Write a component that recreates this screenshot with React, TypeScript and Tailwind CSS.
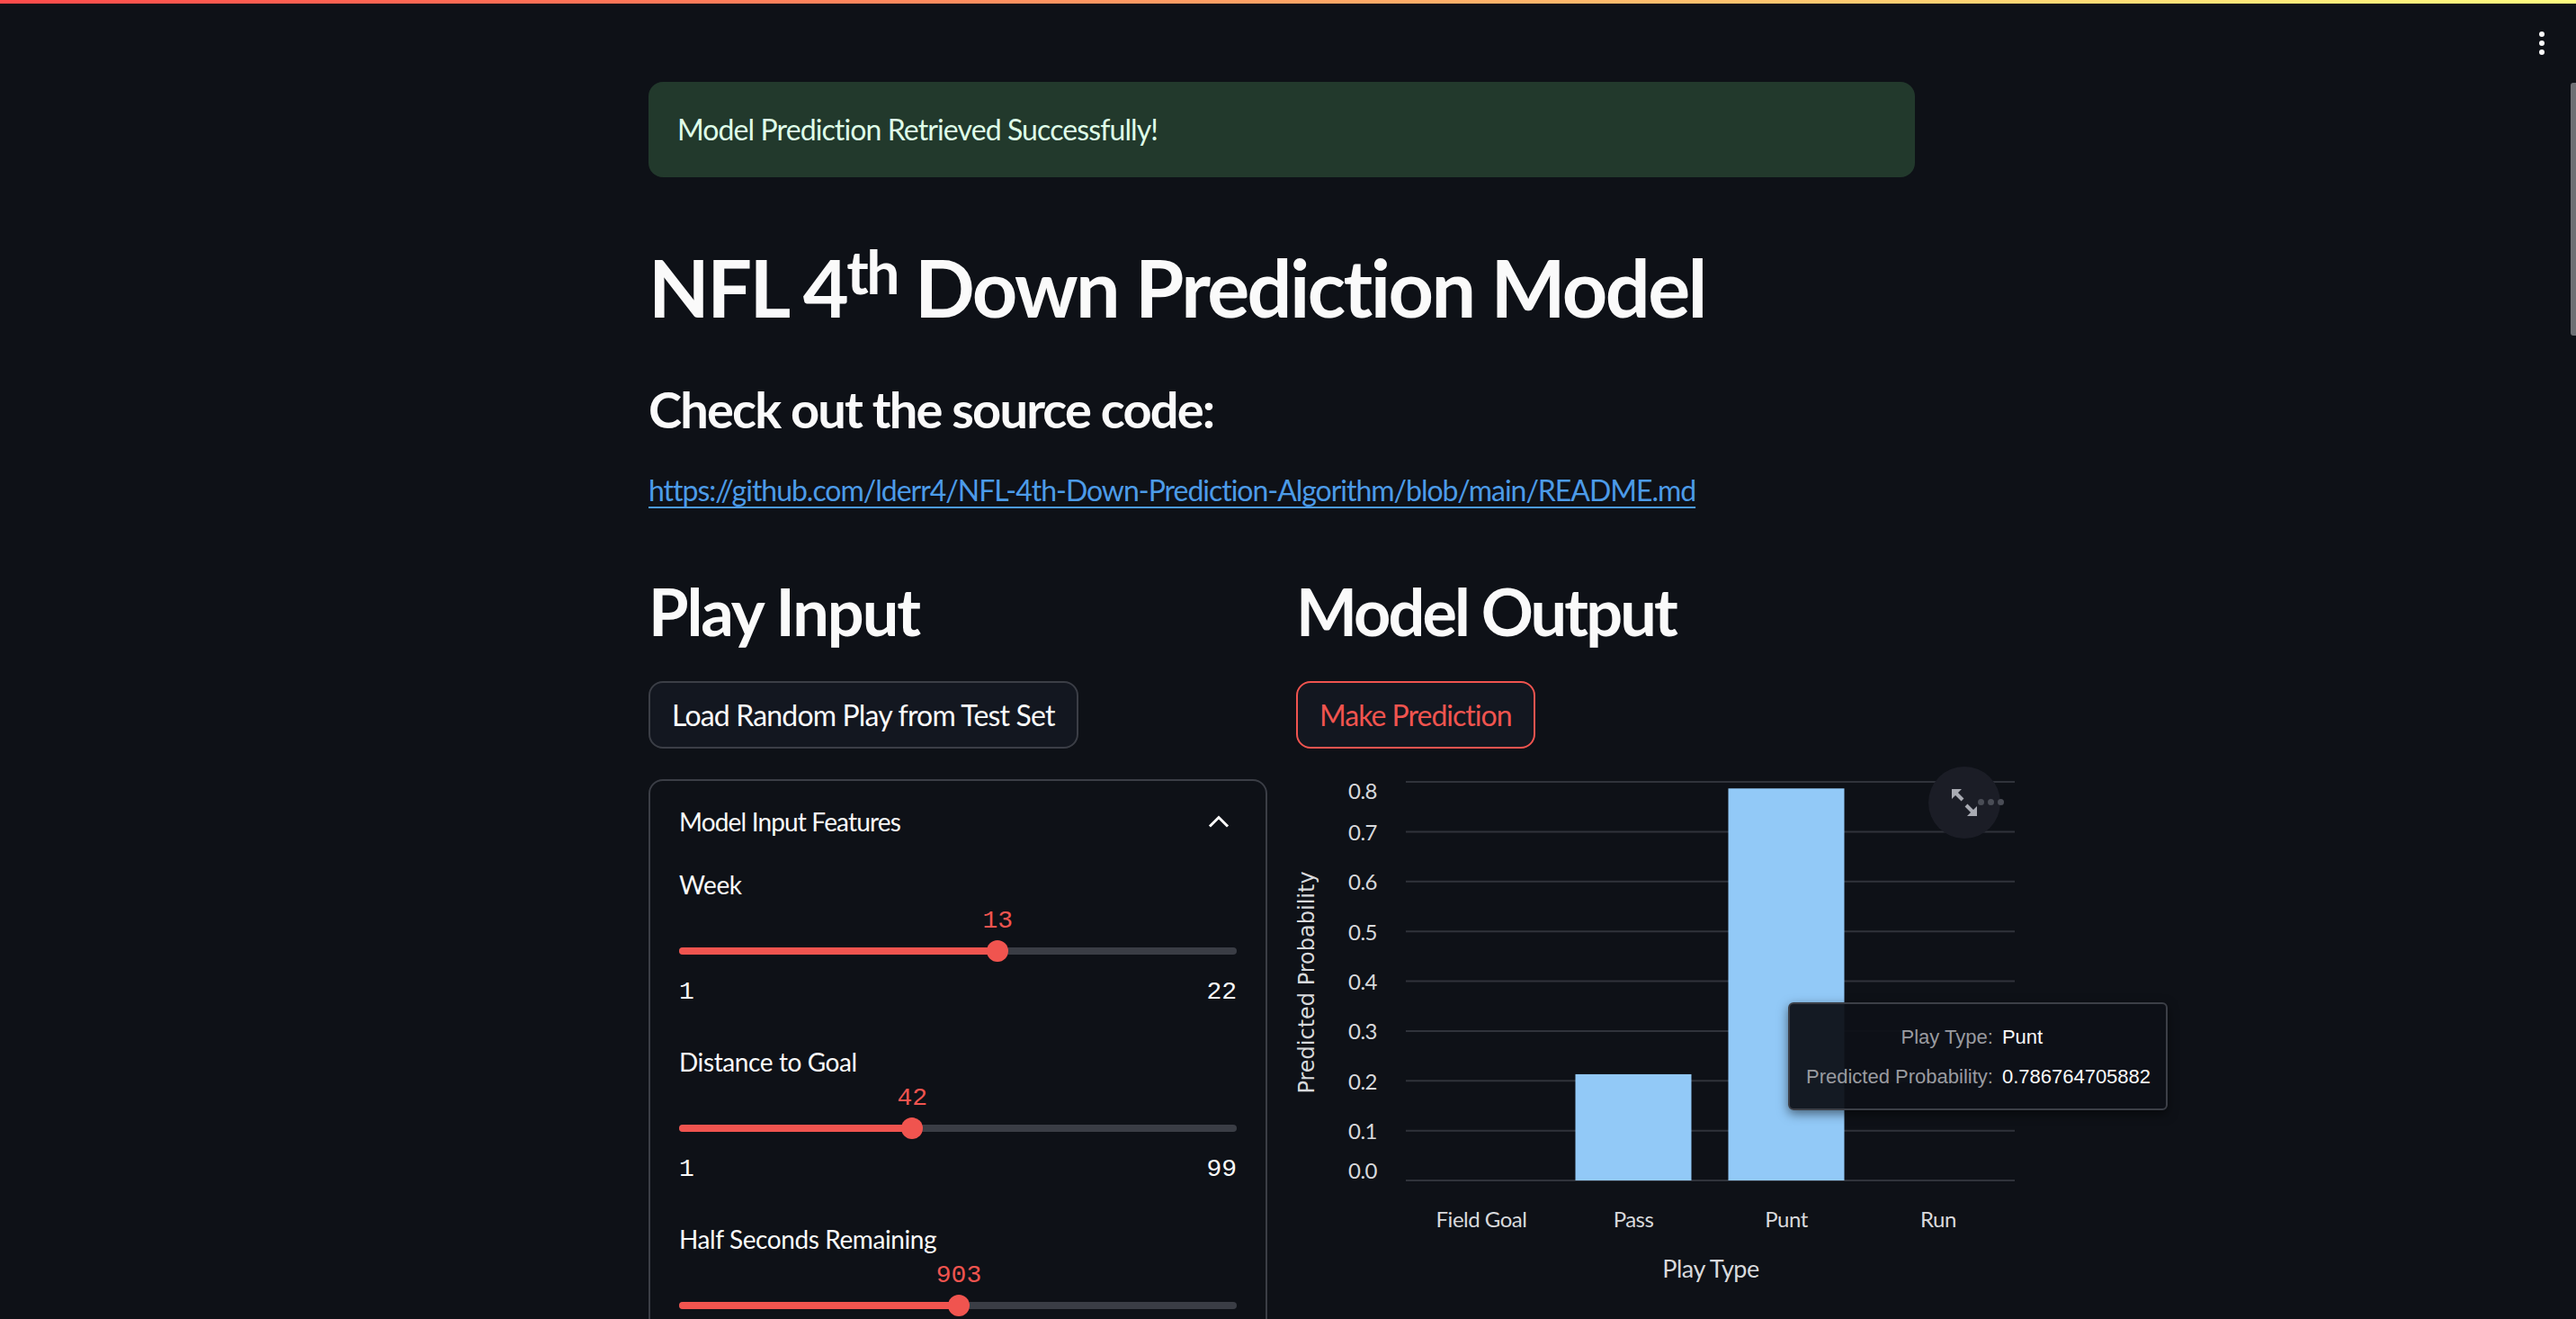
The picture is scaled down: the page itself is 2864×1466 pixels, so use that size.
import React from "react"

function Slider({
  label,
  value,
  min,
  max,
  showTicks = true,
}: {
  label: string
  value: number
  min: number
  max: number
  showTicks?: boolean
}) {
  const pct = ((value - min) / (max - min)) * 100
  return (
    <div className="mb-[35px]">
      <div className="h-[40px] flex items-center text-[28px] text-[#fafafa]">{label}</div>
      <div className="relative h-[42px]">
        <span
          className="absolute top-1/2 -translate-x-1/2 -translate-y-1/2 font-['Liberation_Mono',monospace] text-[28px] leading-none tracking-normal text-[#f0544f]"
          style={{ left: `${pct}%` }}
        >
          {value}
        </span>
      </div>
      <div className="relative h-[24px] flex items-center">
        <div className="relative h-[8px] w-full rounded-full bg-[#3a3d45]">
          <div className="absolute inset-y-0 left-0 rounded-full bg-[#f0544f]" style={{ width: `${pct}%` }} />
        </div>
        <div
          className="absolute top-0 h-[24px] w-[24px] -translate-x-1/2 rounded-full bg-[#f0544f]"
          style={{ left: `${pct}%` }}
        />
      </div>
      {showTicks && (
        <div className="mt-[12px] h-[44px] flex items-center justify-between font-['Liberation_Mono',monospace] text-[28px] tracking-normal text-[#fafafa]">
          <span>{min}</span>
          <span>{max}</span>
        </div>
      )}
    </div>
  )
}

function Chart() {
  const y = (v: number) => 452 - v * 553.75
  const ticks = [0, 0.1, 0.2, 0.3, 0.4, 0.5, 0.6, 0.7, 0.8]
  const labelY = (v: number) => (v === 0.8 ? 18 : v === 0 ? 440 : y(v))
  const cats = [
    { name: "Field Goal", x: 206, v: 0 },
    { name: "Pass", x: 375, v: 0.2132 },
    { name: "Punt", x: 545, v: 0.7868 },
    { name: "Run", x: 714, v: 0 },
  ]
  return (
    <div className="relative mt-[28px] h-[600px] tracking-normal">
      <svg width="1000" height="600" className="absolute left-0 top-0 overflow-visible">
        {ticks.map((t) => (
          <line key={t} x1={122} x2={799} y1={y(t)} y2={y(t)} stroke="#30333b" strokeWidth={2} />
        ))}
        {cats.map((c) =>
          c.v > 0 ? (
            <rect key={c.name} x={c.x - 64.5} y={y(c.v)} width={129} height={452 - y(c.v)} fill="#92c9f7" />
          ) : null
        )}
        {ticks.map((t) => (
          <text
            key={t}
            x={90}
            y={labelY(t)}
            textAnchor="end"
            dominantBaseline="central"
            fontFamily="Lato, sans-serif"
            fontSize={24}
            letterSpacing={-0.5}
            fill="#d8d9dc"
          >
            {t.toFixed(1)}
          </text>
        ))}
        {cats.map((c) => (
          <text
            key={c.name}
            x={c.x}
            y={494}
            textAnchor="middle"
            dominantBaseline="central"
            fontFamily="Lato, sans-serif"
            fontSize={24}
            letterSpacing={-0.5}
            fill="#d8d9dc"
          >
            {c.name}
          </text>
        ))}
        <text
          x={461}
          y={549}
          textAnchor="middle"
          dominantBaseline="central"
          fontFamily="Lato, sans-serif"
          fontSize={27}
          letterSpacing={-0.5}
          fill="#d8d9dc"
        >
          Play Type
        </text>
        <text
          x={12}
          y={232}
          textAnchor="middle"
          dominantBaseline="central"
          transform="rotate(-90 12 232)"
          fontFamily="DejaVu Sans, sans-serif"
          fontSize={24}
          fill="#d8d9dc"
        >
          Predicted Probability
        </text>
      </svg>

      {/* fullscreen / more toolbar */}
      <div className="absolute left-[703px] top-[-8px] flex h-[80px] w-[80px] items-center justify-center rounded-full bg-[#1b1d26]">
        <svg width="28" height="30" viewBox="0 0 28 30">
          <path d="M0 0 H11 L0 11 Z" fill="#a9abb3" />
          <line x1="3" y1="3" x2="12" y2="12" stroke="#a9abb3" strokeWidth="4" />
          <path d="M28 30 H17 L28 19 Z" fill="#a9abb3" />
          <line x1="25" y1="27" x2="16" y2="18" stroke="#a9abb3" strokeWidth="4" />
        </svg>
      </div>
      <div className="absolute left-[758px] top-[28px] flex gap-[4px]">
        <span className="h-[7px] w-[7px] rounded-full bg-[#4a4d56]" />
        <span className="h-[7px] w-[7px] rounded-full bg-[#4a4d56]" />
        <span className="h-[7px] w-[7px] rounded-full bg-[#4a4d56]" />
      </div>

      {/* tooltip */}
      <div className="absolute left-[547px] top-[254px] w-[422px] rounded-[6px] border-2 border-[#3c3f47] bg-[#0e1117]/95 py-[14px] font-['Liberation_Sans',Arial,sans-serif] text-[22px] whitespace-nowrap shadow-[0_4px_12px_rgba(0,0,0,0.5)]">
        <table className="ml-[18px] border-separate border-spacing-0">
          <tbody>
            <tr className="h-[44px]">
              <td className="pr-[10px] text-right text-[#9a9ba0]">Play Type:</td>
              <td className="text-[#fafafa]">Punt</td>
            </tr>
            <tr className="h-[44px]">
              <td className="pr-[10px] text-right text-[#9a9ba0]">Predicted Probability:</td>
              <td className="text-[#fafafa]">0.786764705882</td>
            </tr>
          </tbody>
        </table>
      </div>
    </div>
  )
}

export default function App() {
  return (
    <div className="relative h-[1466px] overflow-hidden bg-[#0e1117] font-['Lato','Noto_Sans',sans-serif] tracking-[-0.025em] text-[#fafafa]">
      <div className="h-[4px] bg-[linear-gradient(90deg,#ff4b4b,#fffd80)]" />

      {/* main menu */}
      <div className="absolute right-[35px] top-[35px] flex flex-col gap-[4px]">
        <span className="h-[6px] w-[6px] rounded-full bg-[#fafafa]" />
        <span className="h-[6px] w-[6px] rounded-full bg-[#fafafa]" />
        <span className="h-[6px] w-[6px] rounded-full bg-[#fafafa]" />
      </div>

      {/* scrollbar */}
      <div className="absolute right-0 top-[92px] h-[281px] w-[6px] rounded-l-[3px] bg-[#6f7075]" />

      <main className="ml-[721px] w-[1408px] pt-[87px]">
        <div className="flex h-[106px] items-center rounded-[16px] bg-[#22392c] px-[32px] text-[32px] tracking-[-0.028em] text-[#dffde9]">
          Model Prediction Retrieved Successfully!
        </div>

        <h1 className="mt-[69px] text-[88px] font-bold leading-[106px] tracking-[-0.029em]">
          NFL 4<sup className="relative top-[-26px] align-baseline text-[66px]">th</sup> Down Prediction Model
        </h1>

        <h3 className="mt-[49px] text-[56px] font-bold leading-[68px] tracking-[-0.033em]">Check out the source code:</h3>

        <a
          href="#"
          className="mt-[32px] block text-[32px] leading-[48px] tracking-[-0.032em] text-[#4c9be8] underline decoration-2 underline-offset-[6px]"
        >
          https://github.com/lderr4/NFL-4th-Down-Prediction-Algorithm/blob/main/README.md
        </a>

        <div className="mt-[67px] grid grid-cols-[688px_688px] gap-[32px]">
          <div>
            <h2 className="text-[72px] font-bold leading-[86px] tracking-[-0.028em]">Play Input</h2>
            <button className="mt-[35px] flex h-[75px] items-center rounded-[16px] border-2 border-[#3b3e46] bg-[#131720] px-[24px] text-[32px] tracking-[-0.026em] text-[#fafafa]">
              Load Random Play from Test Set
            </button>
            <div className="mt-[34px] h-[700px] rounded-[16px] border-2 border-[#3b3e46]">
              <div className="flex h-[90px] items-center justify-between pl-[32px] pr-[34px]">
                <span className="text-[28px] tracking-[-0.03em]">Model Input Features</span>
                <svg width="36" height="36" viewBox="0 0 24 24" fill="none" stroke="#fafafa" strokeWidth="2" strokeLinecap="square">
                  <path d="m18 15-6-6-6 6" />
                </svg>
              </div>
              <div className="px-[32px] pt-[5px]">
                <Slider label="Week" value={13} min={1} max={22} />
                <Slider label="Distance to Goal" value={42} min={1} max={99} />
                <Slider label="Half Seconds Remaining" value={903} min={0} max={1800} showTicks={false} />
              </div>
            </div>
          </div>

          <div>
            <h2 className="text-[72px] font-bold leading-[86px] tracking-[-0.04em]">Model Output</h2>
            <button className="mt-[35px] flex h-[75px] items-center rounded-[16px] border-2 border-[#f0544f] bg-[#131720] px-[24px] text-[32px] tracking-[-0.031em] text-[#f0544f]">
              Make Prediction
            </button>
            <Chart />
          </div>
        </div>
      </main>
    </div>
  )
}
